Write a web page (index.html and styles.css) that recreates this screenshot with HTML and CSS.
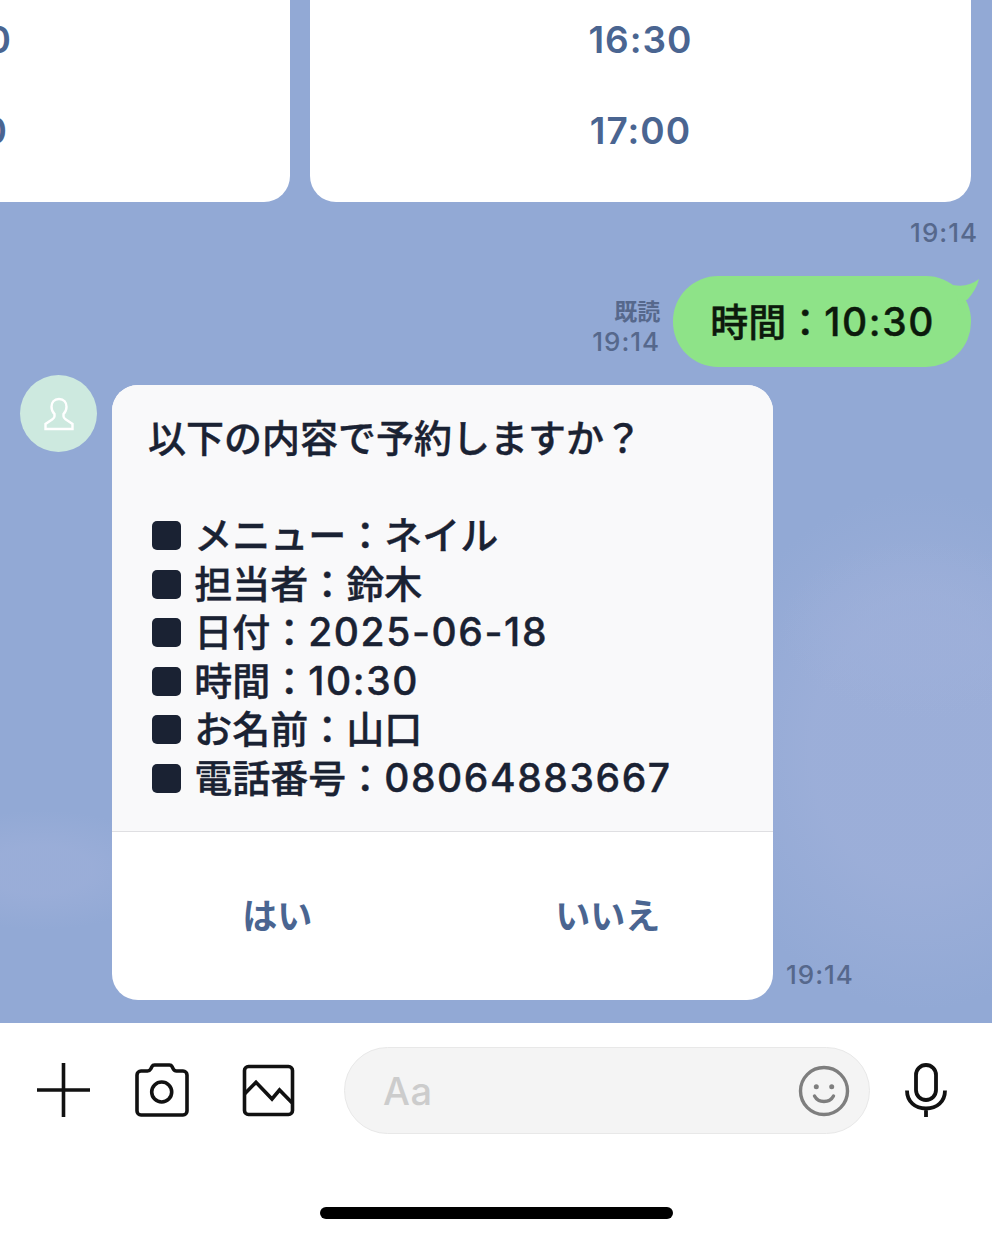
FILE: index.html
```html
<!DOCTYPE html>
<html lang="ja">
<head>
<meta charset="utf-8">
<title>トーク</title>
<link rel="stylesheet" href="styles.css">
</head>
<body>
<main class="chat">
  <div class="cards">
    <div class="slots"><div class="slot">10:00</div><div class="slot">10:30</div><div class="slot">11:00</div></div>
    <div class="slots"><div class="slot">16:00</div><div class="slot">16:30</div><div class="slot">17:00</div></div>
  </div>
  <div class="time time-top">19:14</div>
  <div class="sent">
    <div class="time meta"><div>既読</div><div>19:14</div></div>
    <div class="bubble">時間：<span class="num">10:30</span>
      <svg class="tail" width="30" height="26" viewBox="0 0 30 26"><path d="M4 6C14 8 22 6 30 0C28 8 24 14 19 20L10 26Z" fill="#8ee388"/></svg>
    </div>
  </div>
  <div class="received">
    <div class="avatar">
      <svg width="32" height="34" viewBox="0 0 32 34" fill="none" stroke="#fff" stroke-width="2.4"><path d="M16 2c-5 0-7.500 3.600-7.500 7.800 0 3 1.200 5.600 3 7.200v2.200c0 1.400-.8 2.200-2 3L2.500 27v5h27v-5l-7-4.800c-1.200-.8-2-1.600-2-3V17c1.800-1.600 3-4.200 3-7.200C23.500 5.600 21 2 16 2z"/></svg>
    </div>
    <article class="card">
      <div class="card-body">
        <div class="line">以下の内容で予約しますか？</div>
        <div class="line"></div>
        <div class="line"><span class="mark">■</span> メニュー：ネイル</div>
        <div class="line"><span class="mark">■</span> 担当者：鈴木</div>
        <div class="line"><span class="mark">■</span> 日付：<span class="num">2025-06-18</span></div>
        <div class="line"><span class="mark">■</span> 時間：<span class="num">10:30</span></div>
        <div class="line"><span class="mark">■</span> お名前：山口</div>
        <div class="line"><span class="mark">■</span> 電話番号：<span class="num">08064883667</span></div>
      </div>
      <div class="card-actions">
        <div class="action">はい</div>
        <div class="action">いいえ</div>
      </div>
    </article>
    <div class="time time-card">19:14</div>
  </div>
</main>
<footer class="bar">
  <div class="tools">
    <svg class="icon" width="54" height="54" viewBox="0 0 54 54" fill="none" stroke="#111" stroke-width="3.600"><path d="M27.500 0v54M1 27h53"/></svg>
    <svg class="icon camera" width="54" height="54" viewBox="0 0 54 54" fill="none" stroke="#111" stroke-width="3.600"><path d="M6 8h6.500c1.500 0 2.500-.7 3.200-2L17 3.500C17.500 2.500 18.300 2 19.500 2h15c1.200 0 2 .5 2.500 1.500L38.300 6c.7 1.300 1.700 2 3.200 2H48a4 4 0 0 1 4 4v36a4 4 0 0 1-4 4H6a4 4 0 0 1-4-4V12a4 4 0 0 1 4-4z"/><circle cx="26.700" cy="29" r="10"/></svg>
    <svg class="icon image" width="54" height="54" viewBox="0 0 54 54" fill="none" stroke="#111" stroke-width="3.600"><rect x="2.500" y="3.500" width="48" height="48" rx="4"/><path d="M2.500 31L14 19.300 30 36 37.500 27 50 39.700"/></svg>
    <div class="input">
      <span class="placeholder">Aa</span>
      <svg class="smile" width="52" height="52" viewBox="0 0 52 52" fill="none" stroke="#7e7e7e" stroke-width="3.400"><circle cx="26" cy="26" r="23.500"/><path d="M16.500 31c2 3.800 5.500 5.500 9.500 5.500s7.500-1.700 9.500-5.500" stroke-linecap="round"/><circle cx="18.300" cy="21.700" r="2.500" fill="#7e7e7e" stroke="none"/><circle cx="33.700" cy="21.700" r="2.500" fill="#7e7e7e" stroke="none"/></svg>
    </div>
    <svg class="icon mic" width="54" height="54" viewBox="0 0 54 54" fill="none" stroke="#111" stroke-width="3.800"><rect x="17" y="2" width="20" height="35" rx="10"/><path d="M8 27.500c0 11 8 18 19 18s19-7 19-18M27 45v9"/></svg>
  </div>
  <div class="home"></div>
</footer>
</body>
</html>
```
FILE: styles.css
```css
html, body {
  margin: 0;
  padding: 0;
  background: #fff;
}
body {
  width: 992px;
  height: 1240px;
  overflow: hidden;
  font-family: Inter, "Noto Sans CJK JP", sans-serif;
  font-weight: 500;
}
.chat {
  height: 1023px;
  box-sizing: border-box;
  overflow: hidden;
  display: flex;
  flex-direction: column;
  justify-content: flex-end;
  padding-bottom: 23px;
  background-color: #92a9d5;
  background-image:
    radial-gradient(ellipse 140px 90px at 920px 630px, rgba(158,176,218,.6) 40%, rgba(158,176,218,0) 100%),
    radial-gradient(ellipse 215px 260px at 920px 750px, rgba(157,175,217,.85) 50%, rgba(157,175,217,0) 100%),
    radial-gradient(ellipse 130px 60px at 40px 870px, rgba(157,175,217,.7) 40%, rgba(157,175,217,0) 100%);
}
.cards {
  display: flex;
  justify-content: flex-end;
  gap: 20px;
  padding-right: 21px;
  flex: none;
}
.slots {
  flex: none;
  width: 661px;
  box-sizing: border-box;
  padding-bottom: 26px;
  background: #fff;
  border-radius: 0 0 26px 26px;
}
.slot {
  height: 91px;
  line-height: 91px;
  text-align: center;
  font-size: 37px;
  font-weight: 600;
  letter-spacing: 1px;
  color: #4a6591;
}
.time {
  font-size: 26px;
  line-height: 30px;
  letter-spacing: 1px;
  color: #56688c;
  flex: none;
}
.time-top {
  text-align: right;
  padding-right: 14px;
  margin: 16px 0 28px;
}
.sent {
  display: flex;
  justify-content: flex-end;
  align-items: flex-end;
  gap: 13px;
  padding-right: 21px;
  margin-bottom: 18px;
  flex: none;
}
.meta {
  text-align: right;
  margin-bottom: 10px;
}
.meta div:first-child {
  font-size: 23px;
  letter-spacing: 0;
  font-weight: 700;
}
.bubble {
  position: relative;
  height: 91px;
  line-height: 91px;
  box-sizing: border-box;
  padding: 0 36px 0 37px;
  border-radius: 45px;
  background: #8ee388;
  color: #0c1a0c;
  font-size: 38px;
  -webkit-text-stroke: .4px #0c1a0c;
}
.num {
  font-size: 39px;
  letter-spacing: 1.600px;
}
.tail {
  position: absolute;
  right: -8px;
  top: 3px;
}
.received {
  display: flex;
  align-items: flex-end;
  padding-left: 20px;
  flex: none;
}
.avatar {
  align-self: flex-start;
  width: 77px;
  height: 77px;
  margin: -10px 15px 0 0;
  border-radius: 50%;
  background: #cde9df;
  display: flex;
  align-items: center;
  justify-content: center;
}
.card {
  width: 661px;
  border-radius: 26px;
  overflow: hidden;
  background: #fff;
  color: #1a2233;
}
.card-body {
  padding: 29px 36px;
  background: #f9f9fa;
  border-bottom: 1px solid #dfdfe2;
  font-size: 38px;
  line-height: 48.500px;
  -webkit-text-stroke: .4px #1a2233;
}
.line {
  height: 48.500px;
  white-space: nowrap;
}
.mark {
  display: inline-block;
  width: 29px;
  height: 29px;
  margin: 0 3px 0 4px;
  overflow: hidden;
  border-radius: 5px;
  background: #1a2233;
  color: #1a2233;
  font-size: 18px;
  line-height: 29px;
  text-align: center;
  vertical-align: -1px;
}
.card-actions {
  display: flex;
  height: 168px;
  box-sizing: border-box;
  padding-bottom: 6px;
}
.action {
  flex: 1;
  display: flex;
  align-items: center;
  justify-content: center;
  font-size: 35px;
  font-weight: 700;
  color: #4a6591;
}
.time-card {
  margin: 0 0 10px 13px;
}
.bar {
  height: 217px;
  box-sizing: border-box;
  padding-top: 24px;
  background: #fff;
}
.tools {
  display: flex;
  align-items: center;
  padding-left: 36px;
  height: 86px;
}
.icon {
  flex: none;
}
.camera {
  margin-left: 45px;
}
.image {
  margin-left: 53px;
}
.input {
  flex: none;
  width: 526px;
  height: 87px;
  box-sizing: border-box;
  margin-left: 48px;
  padding: 1px 19px 0 38px;
  display: flex;
  align-items: center;
  justify-content: space-between;
  border: 1.500px solid #e8e8e8;
  border-radius: 44px;
  background: #f4f4f4;
}
.placeholder {
  font-size: 38px;
  letter-spacing: .5px;
  font-weight: 500;
  color: #cccccc;
}
.mic {
  margin-left: 29px;
}
.home {
  width: 353px;
  height: 12px;
  margin: 74px 0 0 320px;
  border-radius: 6px;
  background: #000;
}
```
